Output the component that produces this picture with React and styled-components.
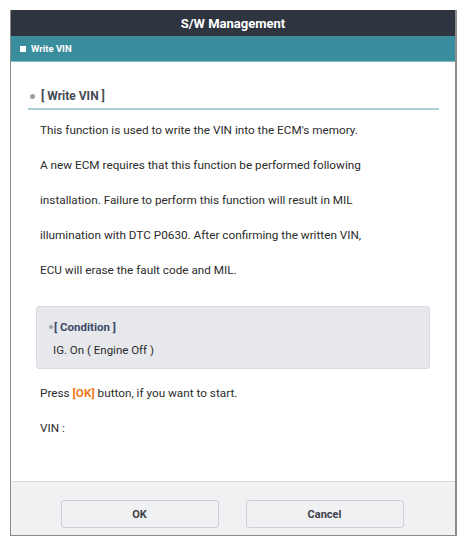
import React from 'react'
import styled, { createGlobalStyle } from 'styled-components'

const Global = createGlobalStyle`
  html, body {
    margin: 0;
    padding: 0;
    background: #ffffff;
    font-family: Roboto, "Liberation Sans", sans-serif;
  }
`

const Page = styled.div`
  padding: 10px 10px 0 10px;
`

const Dialog = styled.div`
  width: 447px;
  height: 526px;
  box-sizing: border-box;
  border: 1px solid #8c8c8c;
  border-top: none;
  border-right-width: 2px;
  display: flex;
  flex-direction: column;
  background: #ffffff;
`

const TitleBar = styled.div`
  height: 26px;
  background: #2e3540;
  color: #ffffff;
  font-weight: 700;
  font-size: 13px;
  display: flex;
  align-items: center;
  justify-content: center;
`

const TabBar = styled.div`
  height: 26px;
  background: #3a8d9d;
  border-bottom: 1px solid #7fbcc7;
  box-sizing: border-box;
  color: #ffffff;
  font-weight: 700;
  font-size: 9.5px;
  display: flex;
  align-items: center;
  gap: 5px;
  padding-left: 9px;
`

const Square = styled.span`
  width: 6px;
  height: 6px;
  background: #ffffff;
`

const Content = styled.div`
  flex: 1;
  padding: 22px 16px 0 17px;
`

const SectionHead = styled.div`
  display: flex;
  align-items: center;
  gap: 6px;
  height: 24px;
  padding-left: 2px;
  border-bottom: 2px solid #a9cfd6;
  color: #454a54;
  font-weight: 700;
  font-size: 12px;
`

const Dot = styled.span`
  width: ${p => p.size || 5}px;
  height: ${p => p.size || 5}px;
  border-radius: 50%;
  background: #9a9ea6;
  flex-shrink: 0;
`

const Body = styled.div`
  padding: 3px 0 0 12px;
  color: #2b2b2b;
  font-size: 11.75px;
`

const Line = styled.p`
  margin: 0;
  line-height: 35px;
  white-space: nowrap;
`

const ConditionBox = styled.div`
  margin: 18px 9px 0 -4px;
  height: 63px;
  box-sizing: border-box;
  background: #e7e8ec;
  border: 1px solid #dadbe0;
  border-radius: 3px;
  padding: 12px 0 0 12px;
`

const CondHead = styled.div`
  display: flex;
  align-items: center;
  gap: 1px;
  color: #3d4a68;
  font-weight: 700;
  font-size: 11.5px;
  height: 16px;
`

const CondText = styled.div`
  margin-top: 8px;
  padding-left: 4px;
  font-size: 11.5px;
  color: #2b2b2b;
`

const Highlight = styled.span`
  color: #f07a1e;
  font-weight: 700;
`

const After = styled.div`
  margin-top: 7px;
`

const Footer = styled.div`
  height: 54px;
  box-sizing: border-box;
  background: #f0f1f3;
  border-top: 1px solid #d8d9dd;
  display: flex;
  justify-content: center;
  gap: 27px;
  padding: 18px 2px 0 0;
`

const Button = styled.button`
  width: 158px;
  height: 28px;
  background: #f0f1f3;
  border: 1px solid #cfd1d6;
  border-radius: 3px;
  color: #3c4049;
  font-family: Roboto, "Liberation Sans", sans-serif;
  font-weight: 700;
  font-size: 11px;
  padding: 0;
`

export default function App() {
  return (
    <Page>
      <Global />
      <Dialog>
        <TitleBar>S/W Management</TitleBar>
        <TabBar>
          <Square />
          Write VIN
        </TabBar>
        <Content>
          <SectionHead>
            <Dot />
            [ Write VIN ]
          </SectionHead>
          <Body>
            <Line>This function is used to write the VIN into the ECM's memory.</Line>
            <Line>A new ECM requires that this function be performed following</Line>
            <Line>installation. Failure to perform this function will result in MIL</Line>
            <Line>illumination with DTC P0630. After confirming the written VIN,</Line>
            <Line>ECU will erase the fault code and MIL.</Line>
            <ConditionBox>
              <CondHead>
                <Dot size={4} />
                [ Condition ]
              </CondHead>
              <CondText>IG. On ( Engine Off )</CondText>
            </ConditionBox>
            <After>
              <Line>
                Press <Highlight>[OK]</Highlight> button, if you want to start.
              </Line>
              <Line>VIN :</Line>
            </After>
          </Body>
        </Content>
        <Footer>
          <Button>OK</Button>
          <Button>Cancel</Button>
        </Footer>
      </Dialog>
    </Page>
  )
}
